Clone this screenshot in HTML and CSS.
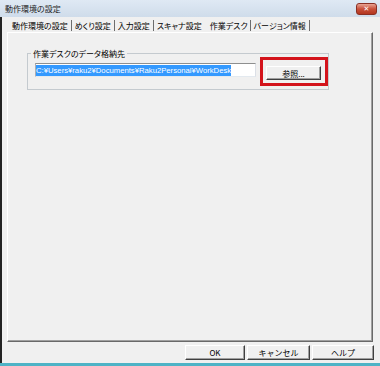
FILE: index.html
```html
<!DOCTYPE html>
<html lang="ja">
<head>
    <meta charset="UTF-8">
    <title>動作環境の設定</title>
    <link rel="stylesheet" href="styles.css">
</head>
<body>
    <div class="window">
        <div class="titlebar">
            <span class="title">動作環境の設定</span>
            <span class="close">✕</span>
        </div>
        <div class="dialog">
            <div class="tabs">
                <span class="tab">動作環境の設定</span>
                <span class="sep"></span>
                <span class="tab">めくり設定</span>
                <span class="sep"></span>
                <span class="tab">入力設定</span>
                <span class="sep"></span>
                <span class="tab">スキャナ設定</span>
                <span class="tab active">作業デスク</span>
                <span class="sep"></span>
                <span class="tab">バージョン情報</span>
                <span class="sep"></span>
            </div>
            <div class="panel">
                <fieldset class="group">
                    <legend>作業デスクのデータ格納先</legend>
                    <div class="row">
                        <div class="textbox"><span class="selected">C:¥Users¥raku2¥Documents¥Raku2Personal¥WorkDesk</span></div>
                        <div class="callout">
                            <button class="btn browse">参照...</button>
                        </div>
                    </div>
                </fieldset>
            </div>
            <div class="footer">
                <button class="btn btn-ok">OK</button>
                <button class="btn btn-cancel">キャンセル</button>
                <button class="btn btn-help">ヘルプ</button>
            </div>
        </div>
        <div class="frame-bottom"></div>
    </div>
</body>
</html>
```

FILE: styles.css
```css
body {
    margin: 0;
    background-color: #f0f0f0;
    font-family: "Noto Sans CJK JP", sans-serif;
    font-size: 8px;
    font-feature-settings: "palt";
    color: #000;
}
.window {
    width: 380px;
    height: 366px;
    display: flex;
    flex-direction: column;
}
.titlebar {
    flex: none;
    height: 17px;
    box-sizing: border-box;
    display: flex;
    align-items: center;
    justify-content: space-between;
    padding: 0 3px 0 5px;
    background: linear-gradient(#dfe9f4, #cfdcea);
    color: #1e1e1e;
}
.close {
    width: 21px;
    height: 12px;
    box-sizing: border-box;
    display: flex;
    align-items: center;
    justify-content: center;
    border: 1px solid #8a3024;
    border-radius: 3px;
    background: linear-gradient(#e9a595, #c8503a 50%, #b3361f);
    color: #fff;
    font-family: "DejaVu Sans", sans-serif;
    font-size: 7px;
    font-weight: bold;
}
.dialog {
    flex: 1;
    display: flex;
    flex-direction: column;
    border-left: 2px solid #232323;
    padding: 2px 0 0 5px;
}
.tabs {
    height: 13px;
    display: flex;
    align-items: center;
    padding-left: 5px;
}
.tab {
    padding-right: 3px;
    line-height: 11px;
    white-space: nowrap;
}
.tab.active {
    padding: 0 2px 0 5px;
}
.sep {
    width: 1px;
    height: 11px;
    background-color: #6d6d6d;
    margin-right: 3px;
}
.panel {
    width: 366px;
    height: 310px;
    box-sizing: border-box;
    border: 1px solid;
    border-color: #fff #696969 #696969 #fff;
    box-shadow: inset -1px -1px #a0a0a0;
    padding-left: 19px;
}
.group {
    width: 298px;
    box-sizing: border-box;
    margin: 16px 0 0 0;
    padding: 0 0 3px 7px;
    border: 1px solid #c4cacf;
}
.group legend {
    margin-left: -4px;
    padding: 0 2px;
    line-height: 9px;
}
.row {
    display: flex;
    align-items: flex-start;
    margin-top: -1px;
}
.textbox {
    width: 221px;
    height: 14px;
    box-sizing: border-box;
    margin-top: 6px;
    padding-top: 1px;
    border: 1px solid;
    border-color: #8e8f8f #dbdfe6 #e3e9ef #abadb3;
    background-color: #fff;
    display: flex;
    font-family: "Liberation Sans", sans-serif;
    font-size: 7.7px;
    font-feature-settings: normal;
}
.selected {
    height: 11px;
    line-height: 11px;
    background-color: #3399ff;
    color: #fff;
    white-space: nowrap;
}
.callout {
    width: 68px;
    height: 29px;
    box-sizing: border-box;
    margin-left: 4px;
    border: 3px solid #d3131b;
    padding: 6px 0 0 3px;
}
.btn {
    height: 15px;
    box-sizing: border-box;
    padding: 0;
    font-family: inherit;
    font-size: 8px;
    line-height: 11px;
    color: #000;
    background-color: #f0f0f0;
    border: 1px solid;
    border-color: #fff #404040 #404040 #fff;
    box-shadow: inset -1px -1px #a0a0a0;
}
.browse {
    display: block;
    width: 55px;
    height: 14px;
}
.footer {
    display: flex;
    justify-content: flex-end;
    gap: 2px;
    margin-top: 3px;
    padding-right: 6px;
}
.btn-ok {
    width: 60px;
}
.btn-cancel {
    width: 63px;
}
.btn-help {
    width: 62px;
}
.frame-bottom {
    flex: none;
    height: 3px;
    background-color: #4eb3c6;
}
```
